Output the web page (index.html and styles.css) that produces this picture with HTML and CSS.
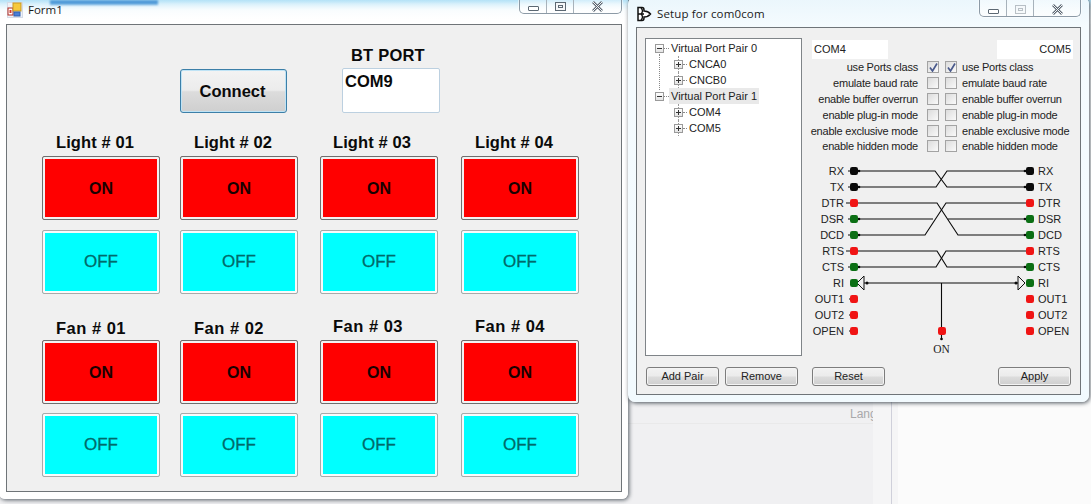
FILE: index.html
```html
<!DOCTYPE html>
<html lang="en">
<head>
<meta charset="utf-8">
<title>Form1 and Setup for com0com</title>
<link rel="stylesheet" href="styles.css">
</head>
<body>
<div class="desktop">
  <div class="glow glow-a"></div>
  <div class="glow glow-b"></div>
  <div class="glow glow-c"></div>
  <div class="back-line"></div>
  <div class="back-lang">Lang</div>
  <div class="back-pane"></div>

  <section class="window form-window">
    <header class="titlebar">
      <svg class="app-icon" width="16" height="16" viewBox="0 0 16 16">
        <rect x="0.5" y="0.5" width="15" height="15" fill="#eef2f8" stroke="#d5dbe6"/>
        <rect x="1" y="6" width="5" height="7" fill="#fff" stroke="#b02a20"/>
        <rect x="2.5" y="8" width="2" height="3" fill="#d43a2c"/>
        <rect x="6" y="1" width="8" height="8" fill="#f6c93c" stroke="#c79a22"/>
        <rect x="7" y="10" width="6" height="4" fill="#4a7fd6" stroke="#2f5fae"/>
      </svg>
      <span class="title-text">Form1</span>
      <div class="caption caption-form">
        <span class="cap-btn"><i class="ico-min"></i></span>
        <span class="cap-btn"><i class="ico-max"></i></span>
        <span class="cap-btn cap-close"><svg width="13" height="11" viewBox="0 0 13 11"><path d="M2 1 L11 10 M11 1 L2 10" stroke="#5b6570" stroke-width="2.6" fill="none"/><path d="M2 1 L11 10 M11 1 L2 10" stroke="#f4f6f8" stroke-width="1" fill="none"/></svg></span>
      </div>
    </header>
    <main class="client form-client">
      <div class="form-head">
        <button class="connect">Connect</button>
        <div class="port-group">
          <div class="port-label">BT PORT</div>
          <div class="port-box">COM9</div>
        </div>
      </div>
      <div class="switch-grid">
        <div class="card"><div class="card-label">Light # 01</div><div class="sw on">ON</div><div class="sw off">OFF</div></div>
        <div class="card"><div class="card-label">Light # 02</div><div class="sw on">ON</div><div class="sw off">OFF</div></div>
        <div class="card"><div class="card-label nudge">Light # 03</div><div class="sw on">ON</div><div class="sw off">OFF</div></div>
        <div class="card"><div class="card-label">Light # 04</div><div class="sw on">ON</div><div class="sw off">OFF</div></div>
        <div class="card fan"><div class="card-label low">Fan # 01</div><div class="sw on">ON</div><div class="sw off">OFF</div></div>
        <div class="card fan"><div class="card-label low">Fan # 02</div><div class="sw on">ON</div><div class="sw off">OFF</div></div>
        <div class="card fan"><div class="card-label nudge">Fan # 03</div><div class="sw on">ON</div><div class="sw off">OFF</div></div>
        <div class="card fan"><div class="card-label">Fan # 04</div><div class="sw on">ON</div><div class="sw off">OFF</div></div>
      </div>
    </main>
  </section>

  <section class="window setup-window">
    <header class="titlebar">
      <svg class="app-icon setup-icon" width="16" height="16" viewBox="0 0 16 16">
        <path d="M2 1.5 H6 Q8 1.5 8 4 L8 5 Q12 5 14.5 8 Q12 11 8 11 L8 12 Q8 14.5 6 14.5 H2 Z" fill="#fff" stroke="#111" stroke-width="1.5"/>
        <path d="M2 8 H8 M5 2 Q8 5 5 8 Q8 11 5 14" fill="none" stroke="#111" stroke-width="1.3"/>
      </svg>
      <span class="title-text">Setup for com0com</span>
      <div class="caption caption-setup">
        <span class="cap-btn"><i class="ico-min"></i></span>
        <span class="cap-btn"><i class="ico-max faded"></i></span>
        <span class="cap-btn cap-close"><svg width="13" height="11" viewBox="0 0 13 11"><path d="M2 1 L11 10 M11 1 L2 10" stroke="#5b6570" stroke-width="2.6" fill="none"/><path d="M2 1 L11 10 M11 1 L2 10" stroke="#f4f6f8" stroke-width="1" fill="none"/></svg></span>
      </div>
    </header>
    <main class="client setup-client">
      <div class="setup-top">
        <nav class="tree">
          <div class="tree-group">
            <div class="tree-row root"><b class="exp minus"></b><i class="dash"></i><span>Virtual Port Pair 0</span></div>
            <div class="tree-row child"><b class="exp plus"></b><i class="dash"></i><span>CNCA0</span></div>
            <div class="tree-row child"><b class="exp plus"></b><i class="dash"></i><span>CNCB0</span></div>
          </div>
          <div class="tree-group last">
            <div class="tree-row root"><b class="exp minus"></b><i class="dash"></i><span class="selected">Virtual Port Pair 1</span></div>
            <div class="tree-row child"><b class="exp plus"></b><i class="dash"></i><span>COM4</span></div>
            <div class="tree-row child"><b class="exp plus"></b><i class="dash"></i><span>COM5</span></div>
          </div>
        </nav>
        <div class="ports">
          <div class="name-row">
            <div class="name-box">COM4</div>
            <div class="name-box right">COM5</div>
          </div>
          <div class="options">
            <span class="opt-l">use Ports class</span>
            <span class="check checked"><svg width="9" height="9" viewBox="0 0 9 9"><path d="M1 4.5 L3.5 8 L8 0.5" fill="none" stroke="#4a5a8c" stroke-width="1.7"/></svg></span>
            <span class="check checked"><svg width="9" height="9" viewBox="0 0 9 9"><path d="M1 4.5 L3.5 8 L8 0.5" fill="none" stroke="#4a5a8c" stroke-width="1.7"/></svg></span>
            <span class="opt-r">use Ports class</span>
            <span class="opt-l">emulate baud rate</span><span class="check"></span><span class="check"></span><span class="opt-r">emulate baud rate</span>
            <span class="opt-l">enable buffer overrun</span><span class="check"></span><span class="check"></span><span class="opt-r">enable buffer overrun</span>
            <span class="opt-l">enable plug-in mode</span><span class="check"></span><span class="check"></span><span class="opt-r">enable plug-in mode</span>
            <span class="opt-l">enable exclusive mode</span><span class="check"></span><span class="check"></span><span class="opt-r">enable exclusive mode</span>
            <span class="opt-l">enable hidden mode</span><span class="check"></span><span class="check"></span><span class="opt-r">enable hidden mode</span>
          </div>
          <svg class="wiring" width="265" height="196" viewBox="810 162 265 196">
            <g class="wires">
              <path d="M858 171 H935 L947 187 H1026"/>
              <path d="M858 187 H936 L947 171 H1026"/>
              <path d="M858 203 H937 L958 235 H1026"/>
              <path d="M858 235 H925 L946 203 H1026"/>
              <path d="M858 219 H933 M948 219 H1026"/>
              <path d="M858 251 H937 L947 267 H1026"/>
              <path d="M858 267 H936 L946 251 H1026"/>
              <path d="M864 283 H1018 M941.5 283 V327 M941.5 335 V340"/>
              <path d="M848 171 H850 M848 187 H850 M846 203 H850 M848 219 H850 M848 235 H850 M846 251 H850 M848 267 H850 M849 299 H850 M849 315 H850 M849 331 H850"/>
            </g>
            <g class="tips">
              <circle cx="859" cy="171" r="1.3"/><circle cx="859" cy="187" r="1.3"/><circle cx="859" cy="219" r="1.3"/><circle cx="859" cy="235" r="1.3"/><circle cx="859" cy="267" r="1.3"/>
              <circle cx="1025" cy="171" r="1.3"/><circle cx="1025" cy="187" r="1.3"/><circle cx="1025" cy="219" r="1.3"/><circle cx="1025" cy="235" r="1.3"/><circle cx="1025" cy="267" r="1.3"/>
              <circle cx="867" cy="283" r="1.5"/><circle cx="1016" cy="283" r="1.5"/><circle cx="941.5" cy="339" r="1.3"/>
            </g>
            <path class="tri" d="M864 276 V290 L857 283 Z"/>
            <path class="tri" d="M1018 276 V290 L1025 283 Z"/>
            <g class="pins">
              <rect class="black" x="850" y="167" width="8" height="8" rx="2.2"/><rect class="black" x="850" y="183" width="8" height="8" rx="2.2"/>
              <rect class="red" x="850" y="199" width="8" height="8" rx="2.2"/><rect class="green" x="850" y="215" width="8" height="8" rx="2.2"/>
              <rect class="green" x="850" y="231" width="8" height="8" rx="2.2"/><rect class="red" x="850" y="247" width="8" height="8" rx="2.2"/>
              <rect class="green" x="850" y="263" width="8" height="8" rx="2.2"/><rect class="green" x="850" y="279" width="8" height="8" rx="2.2"/>
              <rect class="red" x="850" y="295" width="8" height="8" rx="2.2"/><rect class="red" x="850" y="311" width="8" height="8" rx="2.2"/>
              <rect class="red" x="850" y="327" width="8" height="8" rx="2.2"/>
              <rect class="black" x="1026" y="167" width="8" height="8" rx="2.2"/><rect class="black" x="1026" y="183" width="8" height="8" rx="2.2"/>
              <rect class="red" x="1026" y="199" width="8" height="8" rx="2.2"/><rect class="green" x="1026" y="215" width="8" height="8" rx="2.2"/>
              <rect class="green" x="1026" y="231" width="8" height="8" rx="2.2"/><rect class="red" x="1026" y="247" width="8" height="8" rx="2.2"/>
              <rect class="green" x="1026" y="263" width="8" height="8" rx="2.2"/><rect class="green" x="1026" y="279" width="8" height="8" rx="2.2"/>
              <rect class="red" x="1026" y="295" width="8" height="8" rx="2.2"/><rect class="red" x="1026" y="311" width="8" height="8" rx="2.2"/>
              <rect class="red" x="1026" y="327" width="8" height="8" rx="2.2"/>
              <rect class="red" x="938" y="327" width="8" height="8" rx="2.2"/>
            </g>
            <g class="pin-l">
              <text x="844" y="175">RX</text><text x="844" y="191">TX</text><text x="844" y="207">DTR</text><text x="844" y="223">DSR</text>
              <text x="844" y="239">DCD</text><text x="844" y="255">RTS</text><text x="844" y="271">CTS</text><text x="844" y="287">RI</text>
              <text x="844" y="303">OUT1</text><text x="844" y="319">OUT2</text><text x="844" y="335">OPEN</text>
            </g>
            <g class="pin-r">
              <text x="1038" y="175">RX</text><text x="1038" y="191">TX</text><text x="1038" y="207">DTR</text><text x="1038" y="223">DSR</text>
              <text x="1038" y="239">DCD</text><text x="1038" y="255">RTS</text><text x="1038" y="271">CTS</text><text x="1038" y="287">RI</text>
              <text x="1038" y="303">OUT1</text><text x="1038" y="319">OUT2</text><text x="1038" y="335">OPEN</text>
            </g>
            <text class="pin-on" x="941.5" y="353">ON</text>
          </svg>
        </div>
      </div>
      <div class="setup-actions">
        <div class="act-group left">
          <button class="act">Add Pair</button>
          <button class="act">Remove</button>
        </div>
        <button class="act">Reset</button>
        <button class="act push">Apply</button>
      </div>
    </main>
  </section>
</div>
</body>
</html>
```

FILE: styles.css
```css
* { box-sizing: border-box; }
html, body { margin: 0; padding: 0; }
body { width: 1091px; height: 504px; overflow: hidden; font-family: "Liberation Sans", Arial, sans-serif; }

.desktop { position: relative; width: 1091px; height: 504px; overflow: hidden; background: #f0f0f2; }

/* blurred things behind the glass */
.glow { position: absolute; }
.glow-a { left: 0; top: 0; width: 1091px; height: 24px; background: linear-gradient(180deg, #b4e2f7 0, #d5effb 4px, #f4fbfe 10px, #ffffff 20px); }
.glow-b { left: 50px; top: 0; width: 108px; height: 5px; background: #4f9ad8; filter: blur(1px); }
.glow-c { left: 898px; top: 24px; width: 193px; height: 480px; background: #fbfbfb; }
.back-line { position: absolute; left: 628px; top: 423px; width: 245px; height: 1px; background: #e9e9ea; }
.back-lang { position: absolute; left: 850px; top: 407px; font-size: 12px; color: #a8a8aa; }
.back-pane { position: absolute; left: 873px; top: 402px; width: 25px; height: 102px; background: #f5f5f6; }
.back-pane::after { content: ""; position: absolute; left: 18px; top: 0; width: 1px; height: 102px; background: #cfd0da; }

.window { position: absolute; display: flex; flex-direction: column; }
.form-window {
  left: -1px; top: -6px; width: 629px; height: 505px;
  padding: 0 6px 7px 7px;
  border-radius: 0 0 6px 6px;
  background: linear-gradient(180deg, rgba(255,255,255,0) 0, rgba(255,255,255,0) 8px, #ffffff 30px, #ffffff 100%);
  box-shadow: 1px 1px 4px rgba(30,40,50,.75);
}
.setup-window {
  left: 628px; top: -3px; width: 461px; height: 405px;
  padding: 0 8px 7px 8px;
  border-radius: 7px;
  background: linear-gradient(180deg, #eaf6fc 0, #f5fbfe 30px, #f2fafe 100%);
  box-shadow: 1px 1px 4px rgba(30,40,50,.8);
}

.titlebar { position: relative; flex: none; display: flex; align-items: center; }
.form-window .titlebar { height: 30px; padding-top: 1px; }
.setup-window .titlebar { height: 30px; padding-top: 3px; }
.app-icon { flex: none; margin-left: 1px; }
.setup-icon { margin-left: 0; }
.title-text { margin-left: 5px; font-family: "Open Sans", "Noto Sans", sans-serif; font-size: 11.5px; color: #1a1a1a; }
.setup-window .title-text { letter-spacing: .15px; }

.caption { position: absolute; top: 0; right: 0; display: flex; background: linear-gradient(180deg, rgba(255,255,255,.2), rgba(255,255,255,.75)); border: 1px solid #8c9aa6; border-top: 0; border-radius: 0 0 5px 5px; box-shadow: 0 0 0 1px rgba(255,255,255,.5); }
.caption-form { height: 20px; width: 103px; }
.caption-setup { height: 20px; width: 102px; }
.cap-btn { display: flex; align-items: center; justify-content: center; height: 100%; flex: none; width: 27px; border-right: 1px solid #a7b2bb; padding-top: 5px; }
.cap-close { flex: 1; border-right: 0; }
.ico-min { display: block; width: 11px; height: 5px; border: 1px solid #5c6873; background: #fff; border-radius: 1px; margin-top: 5px; }
.ico-max { display: block; width: 11px; height: 9px; border: 1px solid #5c6873; background: #f4f6f8; box-shadow: inset 0 0 0 2px #f4f6f8, inset 0 0 0 3px #5c6873; }
.ico-max.faded { opacity: .4; }

.client { flex: 1; background: #f0f0f0; border: 1px solid #6f7478; }

/* Form1 */
.form-client { padding: 21px 0 0 35px; }
.form-head { display: grid; grid-template-columns: 138px 162px 98px; height: 67px; align-items: end; }
.connect {
  grid-column: 2; width: 107px; height: 44px; margin: 0; padding: 0 2px 0 0;
  font: bold 16.5px "Liberation Sans", Arial, sans-serif; color: #0a0a0a;
  border: 1px solid #3c7fa8; border-radius: 3px;
  box-shadow: inset 0 0 0 1px #bfe3f5;
  background: linear-gradient(180deg, #f3f3f3 0, #ececec 48%, #dcdcdc 52%, #cfcfcf 100%);
}
.port-group { grid-column: 3; width: 98px; }
.port-label { height: 22px; line-height: 18px; padding-left: 9px; font-weight: bold; font-size: 16.5px; letter-spacing: .2px; color: #0a0a0a; }
.port-box { height: 45px; padding: 2px 0 0 2px; background: #fff; border: 1px solid #bcd0e0; border-radius: 2px; font-weight: bold; font-size: 16.5px; line-height: 20px; color: #0a0a0a; }

.switch-grid { display: grid; grid-template-columns: 138px 140px 141px 118px; row-gap: 23px; margin-top: 20px; }
.card { width: 118px; }
.card-label { height: 23px; padding-left: 14px; line-height: 18px; font-weight: bold; font-size: 16.5px; letter-spacing: .1px; color: #0a0a0a; white-space: nowrap; }
.fan .card-label { letter-spacing: .5px; }
.card-label.low { padding-top: 2px; }
.card-label.nudge { padding-left: 13px; }
.sw { display: flex; align-items: center; justify-content: center; height: 64px; border-radius: 2px; background-clip: padding-box; font-size: 16px; }
.on { padding-top: 2px; background-color: #ff0000; border: 1px solid #6e6e6e; box-shadow: inset 0 0 0 2px #f2f2f2; font-weight: bold; color: #1a0000; }
.off { background-color: #00ffff; border: 1px solid #a9a9a9; box-shadow: inset 0 0 0 2px #fafafa; margin-top: 10px; color: #006a6a; font-size: 17px; -webkit-text-stroke: .3px #006a6a; }
.fan .off { margin-top: 9px; }

/* Setup */
.setup-client { display: flex; flex-direction: column; padding: 10px 8px 0 8px; font-size: 11px; color: #222; }
.setup-top { display: flex; height: 318px; }
.tree { width: 157px; height: 318px; flex: none; padding: 1px 0 0 9px; background: #fff; border: 1px solid #7f8488; }
.tree-group { position: relative; }
.tree-group::before { content: ""; position: absolute; left: 4px; top: 14px; height: 36px; border-left: 1px dotted #888; }
.tree-group.last::before { display: none; }
.tree-row { position: relative; display: flex; align-items: center; height: 16px; white-space: nowrap; }
.tree-row.child { padding-left: 19px; }
.tree-row.child::before { content: ""; position: absolute; left: 23px; top: 0; height: 16px; border-left: 1px dotted #999; z-index: 0; }
.exp { position: relative; z-index: 1; flex: none; width: 9px; height: 9px; border: 1px solid #9a9a9a; background: linear-gradient(180deg, #fff, #e4e4e4); }
.exp::before { content: ""; position: absolute; left: 1px; top: 3px; width: 5px; height: 1px; background: #333; }
.exp.plus::after { content: ""; position: absolute; left: 3px; top: 1px; width: 1px; height: 5px; background: #333; }
.dash { flex: none; width: 5px; border-top: 1px dotted #888; }
.tree-row.child .dash { width: 4px; }
.tree-row span { display: block; padding: 0 2px; line-height: 16px; }
.selected { background: #e9e9e9; }

.ports { width: 263px; margin-left: 9px; flex: none; }
.name-row { display: flex; justify-content: space-between; padding: 2px 0 0 1px; width: 262px; }
.name-box { width: 76px; height: 19px; padding: 0 2px; background: #fff; line-height: 19px; font-size: 11px; }
.name-box.right { text-align: right; }
.options { display: grid; grid-template-columns: 106px 21px 19px 1fr; grid-auto-rows: 15.9px; padding-left: 1px; letter-spacing: -.22px; }
.opt-l { text-align: right; white-space: nowrap; direction: rtl; line-height: 17px; }
.opt-r { padding-left: 4px; white-space: nowrap; line-height: 17px; }
.check { display: flex; align-items: center; justify-content: center; width: 12px; height: 12px; margin-top: 2px; border: 1px solid #a3a3a3; background: linear-gradient(135deg, #dcdcdc, #fafafa); }
.opt-l + .check { margin-left: 9px; }
.check + .check { margin-left: 6px; }
.wiring { display: block; margin: 8px 0 0 -1px; }
.wires path { fill: none; stroke: #0a0a0a; stroke-width: 1.1; }
.tips circle { fill: #0a0a0a; }
.pins .black { fill: #0a0a0a; }
.pins .red { fill: #f01414; }
.pins .green { fill: #0b6f14; }
.tri { fill: #f0f0f0; stroke: #111; stroke-width: 1; }
.pin-l text { text-anchor: end; font: 11px "Liberation Sans", Arial, sans-serif; fill: #222; }
.pin-r text { font: 11px "Liberation Sans", Arial, sans-serif; fill: #222; }
.pin-on { text-anchor: middle; font: 11.5px "Liberation Serif", serif; fill: #222; }

.setup-actions { display: flex; align-items: flex-start; padding: 11px 0 0 1px; }
.act-group { display: flex; gap: 6px; margin-right: 14px; }
.act { width: 73px; height: 19px; margin: 0; padding: 0 0 1px; font: 11px "Liberation Sans", Arial, sans-serif; color: #222; border: 1px solid #7d7d7d; border-radius: 3px; box-shadow: inset 0 0 0 1px #f4f4f4; background: linear-gradient(180deg, #f2f2f2 0, #ebebeb 48%, #dcdcdc 52%, #cfcfcf 100%); }
.push { margin-left: auto; margin-right: 1px; }
```
